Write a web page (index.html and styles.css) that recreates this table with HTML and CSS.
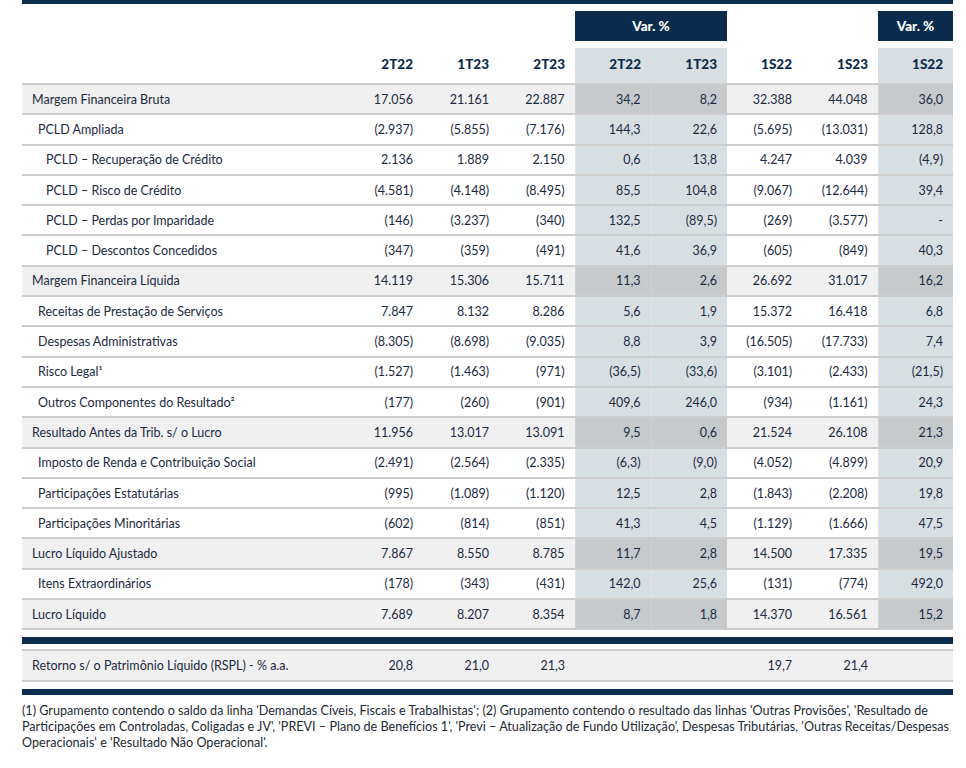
FILE: index.html
```html
<!DOCTYPE html>
<html lang="pt-BR">
<head>
<meta charset="utf-8">
<title>Demonstração do Resultado</title>
<link rel="stylesheet" href="styles.css">
</head>
<body>
<div class="page">
  <div class="bar bar-top"></div>
  <table class="dre">
    <colgroup>
      <col class="c-label"><col class="c-n"><col class="c-n"><col class="c-n"><col class="c-n"><col class="c-n"><col class="c-s"><col class="c-n"><col class="c-s">
    </colgroup>
    <thead>
      <tr class="vr">
        <th></th><th></th><th></th><th></th>
        <th colspan="2" class="vbox">Var. %</th>
        <th></th><th></th>
        <th class="vbox">Var. %</th>
      </tr>
      <tr class="spacer"><th colspan="9"></th></tr>
      <tr class="hd">
        <th></th><th>2T22</th><th>1T23</th><th>2T23</th>
        <th class="v">2T22</th><th class="v">1T23</th>
        <th>1S22</th><th>1S23</th>
        <th class="v">1S22</th>
      </tr>
    </thead>
    <tbody>
      <tr class="main"><td class="l0">Margem Financeira Bruta</td><td>17.056</td><td>21.161</td><td>22.887</td><td class="v">34,2</td><td class="v">8,2</td><td>32.388</td><td>44.048</td><td class="v">36,0</td></tr>
      <tr><td class="l1">PCLD Ampliada</td><td>(2.937)</td><td>(5.855)</td><td>(7.176)</td><td class="v">144,3</td><td class="v">22,6</td><td>(5.695)</td><td>(13.031)</td><td class="v">128,8</td></tr>
      <tr><td class="l2">PCLD – Recuperação de Crédito</td><td>2.136</td><td>1.889</td><td>2.150</td><td class="v">0,6</td><td class="v">13,8</td><td>4.247</td><td>4.039</td><td class="v">(4,9)</td></tr>
      <tr><td class="l2">PCLD – Risco de Crédito</td><td>(4.581)</td><td>(4.148)</td><td>(8.495)</td><td class="v">85,5</td><td class="v">104,8</td><td>(9.067)</td><td>(12.644)</td><td class="v">39,4</td></tr>
      <tr><td class="l2">PCLD – Perdas por Imparidade</td><td>(146)</td><td>(3.237)</td><td>(340)</td><td class="v">132,5</td><td class="v">(89,5)</td><td>(269)</td><td>(3.577)</td><td class="v">-</td></tr>
      <tr><td class="l2">PCLD – Descontos Concedidos</td><td>(347)</td><td>(359)</td><td>(491)</td><td class="v">41,6</td><td class="v">36,9</td><td>(605)</td><td>(849)</td><td class="v">40,3</td></tr>
      <tr class="main"><td class="l0">Margem Financeira Líquida</td><td>14.119</td><td>15.306</td><td>15.711</td><td class="v">11,3</td><td class="v">2,6</td><td>26.692</td><td>31.017</td><td class="v">16,2</td></tr>
      <tr><td class="l1">Receitas de Prestação de Serviços</td><td>7.847</td><td>8.132</td><td>8.286</td><td class="v">5,6</td><td class="v">1,9</td><td>15.372</td><td>16.418</td><td class="v">6,8</td></tr>
      <tr><td class="l1">Despesas Administrativas</td><td>(8.305)</td><td>(8.698)</td><td>(9.035)</td><td class="v">8,8</td><td class="v">3,9</td><td>(16.505)</td><td>(17.733)</td><td class="v">7,4</td></tr>
      <tr><td class="l1">Risco Legal¹</td><td>(1.527)</td><td>(1.463)</td><td>(971)</td><td class="v">(36,5)</td><td class="v">(33,6)</td><td>(3.101)</td><td>(2.433)</td><td class="v">(21,5)</td></tr>
      <tr><td class="l1">Outros Componentes do Resultado²</td><td>(177)</td><td>(260)</td><td>(901)</td><td class="v">409,6</td><td class="v">246,0</td><td>(934)</td><td>(1.161)</td><td class="v">24,3</td></tr>
      <tr class="main"><td class="l0">Resultado Antes da Trib. s/ o Lucro</td><td>11.956</td><td>13.017</td><td>13.091</td><td class="v">9,5</td><td class="v">0,6</td><td>21.524</td><td>26.108</td><td class="v">21,3</td></tr>
      <tr><td class="l1">Imposto de Renda e Contribuição Social</td><td>(2.491)</td><td>(2.564)</td><td>(2.335)</td><td class="v">(6,3)</td><td class="v">(9,0)</td><td>(4.052)</td><td>(4.899)</td><td class="v">20,9</td></tr>
      <tr><td class="l1">Participações Estatutárias</td><td>(995)</td><td>(1.089)</td><td>(1.120)</td><td class="v">12,5</td><td class="v">2,8</td><td>(1.843)</td><td>(2.208)</td><td class="v">19,8</td></tr>
      <tr><td class="l1">Participações Minoritárias</td><td>(602)</td><td>(814)</td><td>(851)</td><td class="v">41,3</td><td class="v">4,5</td><td>(1.129)</td><td>(1.666)</td><td class="v">47,5</td></tr>
      <tr class="main"><td class="l0">Lucro Líquido Ajustado</td><td>7.867</td><td>8.550</td><td>8.785</td><td class="v">11,7</td><td class="v">2,8</td><td>14.500</td><td>17.335</td><td class="v">19,5</td></tr>
      <tr><td class="l1">Itens Extraordinários</td><td>(178)</td><td>(343)</td><td>(431)</td><td class="v">142,0</td><td class="v">25,6</td><td>(131)</td><td>(774)</td><td class="v">492,0</td></tr>
      <tr class="main last"><td class="l0">Lucro Líquido</td><td>7.689</td><td>8.207</td><td>8.354</td><td class="v">8,7</td><td class="v">1,8</td><td>14.370</td><td>16.561</td><td class="v">15,2</td></tr>
    </tbody>
  </table>

  <div class="bar bar-mid"></div>

  <table class="dre rspl">
    <colgroup>
      <col class="c-label"><col class="c-n"><col class="c-n"><col class="c-n"><col class="c-n"><col class="c-n"><col class="c-s"><col class="c-n"><col class="c-s">
    </colgroup>
    <tbody>
      <tr class="main"><td class="l0">Retorno s/ o Patrimônio Líquido (RSPL) - % a.a.</td><td>20,8</td><td>21,0</td><td>21,3</td><td></td><td></td><td>19,7</td><td>21,4</td><td></td></tr>
    </tbody>
  </table>

  <div class="bar bar-bottom"></div>

  <p class="notes">(1) Grupamento contendo o saldo da linha 'Demandas Cíveis, Fiscais e Trabalhistas'; (2) Grupamento contendo o resultado das linhas 'Outras Provisões', 'Resultado de<br>Participações em Controladas, Coligadas e JV', 'PREVI – Plano de Benefícios 1', 'Previ – Atualização de Fundo Utilização', Despesas Tributárias, 'Outras Receitas/Despesas<br>Operacionais' e 'Resultado Não Operacional'.</p>
</div>
</body>
</html>
```

FILE: styles.css
```css
* { box-sizing: border-box; }

html, body {
  margin: 0;
  padding: 0;
  background: #ffffff;
}

body {
  font-family: Lato, "Open Sans", "Liberation Sans", sans-serif;
  color: #1b2a41;
  font-size: 12.5px;
}

.page {
  width: 931px;
  margin-left: 22px;
}

.bar {
  background: #0b2c4c;
}

.bar-top { height: 4px; margin-bottom: 7px; }
.bar-mid { height: 7px; margin-top: 7px; }
.bar-bottom { height: 6px; margin-top: 7px; }

.dre {
  width: 931px;
  table-layout: fixed;
  border-collapse: collapse;
  border-spacing: 0;
}

.c-label { width: 325px; }
.c-n { width: 76px; }
.c-s { width: 75px; }

.dre th,
.dre td {
  padding: 0 10px 0 0;
  text-align: right;
  white-space: nowrap;
}

.vr th { height: 30px; padding: 0; }

.vbox {
  background: #0b2c4c;
  color: #ffffff;
  font-weight: 900;
  font-size: 13.5px;
  text-align: center !important;
  padding: 0 !important;
}

.spacer th { height: 7px; padding: 0; }

.hd th {
  height: 36px;
  font-weight: 900;
  font-size: 13.5px;
  color: #0b2c4c;
  padding-bottom: 3px;
}

.hd th.v { background: #d8dfe3; }

.dre tbody td {
  height: 30.3px;
  border-top: 2px solid #cdcdcd;
}

.dre tbody td.v {
  background: #d8dfe3;
  border-left: 1px solid #e2e7ea;
}

.dre tbody tr.last td { border-bottom: 2px solid #cdcdcd; }

.dre tbody tr.main td { background: #f0f0f0; }
.dre tbody tr.main td.v { background: #c6cacd; border-left-color: #cfd3d6; }

.dre td.l0 { text-align: left; padding-left: 10px; }
.dre td.l1 { text-align: left; padding-left: 16px; }
.dre td.l2 { text-align: left; padding-left: 24px; }

.rspl { margin-top: 5px; }
.rspl tbody td { height: 31px; border-bottom: 2px solid #cdcdcd; }

.notes {
  margin: 8px 0 0 0;
  font-size: 12.6px;
  line-height: 16px;
  color: #222a33;
  white-space: nowrap;
}
```
